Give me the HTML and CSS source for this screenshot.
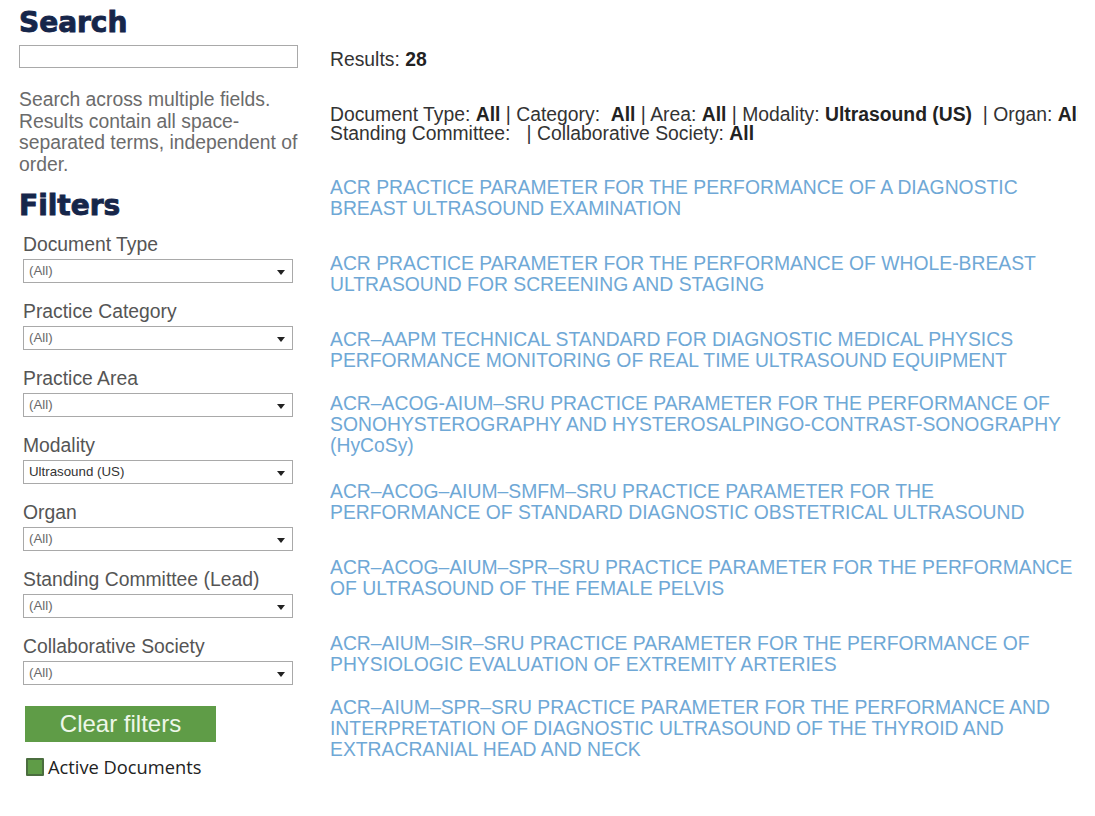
FILE: index.html
```html
<!DOCTYPE html>
<html lang="en">
<head>
<meta charset="utf-8">
<title>Search</title>
<link rel="stylesheet" href="styles.css">
</head>
<body>
<div class="page">
  <aside class="sidebar">
    <h2 class="heading heading--search">Search</h2>
    <input class="search-input" type="text" aria-label="Search">
    <p class="help">Search across multiple fields. Results contain all space-separated terms, independent of order.</p>
    <h2 class="heading heading--filters">Filters</h2>
    <div class="filter">
      <label class="filter-label">Document Type</label>
      <div class="select"><span class="select-value">(All)</span></div>
    </div>
    <div class="filter">
      <label class="filter-label">Practice Category</label>
      <div class="select"><span class="select-value">(All)</span></div>
    </div>
    <div class="filter">
      <label class="filter-label">Practice Area</label>
      <div class="select"><span class="select-value">(All)</span></div>
    </div>
    <div class="filter">
      <label class="filter-label">Modality</label>
      <div class="select"><span class="select-value select-value--set">Ultrasound (US)</span></div>
    </div>
    <div class="filter">
      <label class="filter-label">Organ</label>
      <div class="select"><span class="select-value">(All)</span></div>
    </div>
    <div class="filter">
      <label class="filter-label">Standing Committee (Lead)</label>
      <div class="select"><span class="select-value">(All)</span></div>
    </div>
    <div class="filter">
      <label class="filter-label">Collaborative Society</label>
      <div class="select"><span class="select-value">(All)</span></div>
    </div>
    <button class="clear-btn" type="button">Clear filters</button>
    <div class="legend"><span class="legend-box"></span><span class="legend-text">Active Documents</span></div>
  </aside>
  <main class="results">
    <div class="count">Results: <b>28</b></div>
    <div class="summary">
      <div class="summary-line">Document Type: <b>All</b> | Category:&nbsp; <b>All</b> | Area: <b>All</b> | Modality: <b>Ultrasound (US)</b>&nbsp; | Organ: <b>All</b></div>
      <div class="summary-line">Standing Committee: &nbsp; | Collaborative Society: <b>All</b></div>
    </div>
    <ul class="result-list">
      <li class="result"><a href="#">ACR PRACTICE PARAMETER FOR THE PERFORMANCE OF A DIAGNOSTIC BREAST ULTRASOUND EXAMINATION</a></li>
      <li class="result"><a href="#">ACR PRACTICE PARAMETER FOR THE PERFORMANCE OF WHOLE-BREAST ULTRASOUND FOR SCREENING AND STAGING</a></li>
      <li class="result result--tight"><a href="#">ACR–AAPM TECHNICAL STANDARD FOR DIAGNOSTIC MEDICAL PHYSICS PERFORMANCE MONITORING OF REAL TIME ULTRASOUND EQUIPMENT</a></li>
      <li class="result result--mid"><a href="#">ACR–ACOG-AIUM–SRU PRACTICE PARAMETER FOR THE PERFORMANCE OF SONOHYSTEROGRAPHY AND HYSTEROSALPINGO-CONTRAST-SONOGRAPHY (HyCoSy)</a></li>
      <li class="result"><a href="#">ACR–ACOG–AIUM–SMFM–SRU PRACTICE PARAMETER FOR THE PERFORMANCE OF STANDARD DIAGNOSTIC OBSTETRICAL ULTRASOUND</a></li>
      <li class="result"><a href="#">ACR–ACOG–AIUM–SPR–SRU PRACTICE PARAMETER FOR THE PERFORMANCE OF ULTRASOUND OF THE FEMALE PELVIS</a></li>
      <li class="result result--tight"><a href="#">ACR–AIUM–SIR–SRU PRACTICE PARAMETER FOR THE PERFORMANCE OF PHYSIOLOGIC EVALUATION OF EXTREMITY ARTERIES</a></li>
      <li class="result"><a href="#">ACR–AIUM–SPR–SRU PRACTICE PARAMETER FOR THE PERFORMANCE AND INTERPRETATION OF DIAGNOSTIC ULTRASOUND OF THE THYROID AND EXTRACRANIAL HEAD AND NECK</a></li>
    </ul>
  </main>
</div>
</body>
</html>
```
FILE: styles.css
```css
html, body {
  margin: 0;
  padding: 0;
  background: #ffffff;
}

body {
  font-family: "Liberation Sans", Arial, sans-serif;
  font-size: 19.33px;
  color: #333333;
}

.page {
  display: flex;
  align-items: flex-start;
  padding: 0 17px 0 19px;
}

.sidebar {
  width: 279px;
  flex: none;
  display: flex;
  flex-direction: column;
  align-items: flex-start;
}

.heading {
  margin: 0;
  font-family: "DejaVu Sans", sans-serif;
  font-weight: bold;
  font-size: 28px;
  line-height: 32px;
  color: #16264a;
  -webkit-text-stroke: 0.9px #16264a;
}

.heading--search {
  margin-top: 7px;
}

.heading--filters {
  margin-top: 14px;
}

.search-input {
  box-sizing: border-box;
  width: 279px;
  height: 23px;
  margin: 6px 0 0;
  border: 1px solid #a9a9a9;
  padding: 0 4px;
  background: #fff;
  outline: none;
}

.help {
  margin: 21px 0 0;
  line-height: 21.7px;
  color: #6b6b6b;
}

.filter {
  display: flex;
  flex-direction: column;
  margin-left: 4px;
  margin-top: 18px;
}

.heading--filters + .filter {
  margin-top: 12px;
}

.filter-label {
  line-height: 22px;
  color: #555555;
}

.select {
  position: relative;
  box-sizing: border-box;
  width: 270px;
  height: 24px;
  margin-top: 3px;
  border: 1px solid #a9a9a9;
  background: #fff;
  display: flex;
  align-items: center;
  padding-left: 5px;
}

.select::after {
  content: "";
  position: absolute;
  right: 7px;
  top: 10px;
  border-left: 4px solid transparent;
  border-right: 4px solid transparent;
  border-top: 5px solid #222;
}

.select-value {
  font-size: 13.3px;
  color: #6a6a6a;
}

.select-value--set {
  color: #333333;
}

.clear-btn {
  margin: 21px 0 0 6px;
  width: 191px;
  height: 36px;
  border: none;
  padding: 0;
  background: #5f9c47;
  color: #eef7e9;
  font-family: "Liberation Sans", Arial, sans-serif;
  font-size: 24px;
  line-height: 36px;
  cursor: pointer;
}

.legend {
  display: flex;
  align-items: center;
  margin: 14px 0 0 7px;
}

.legend-box {
  box-sizing: border-box;
  width: 18px;
  height: 18px;
  background: #5f9c47;
  border: 2px solid #4b6e3f;
  border-radius: 1px;
}

.legend-text {
  margin-left: 4px;
  font-family: "Open Sans", "Noto Sans", sans-serif;
  font-size: 18.3px;
  line-height: 22px;
  color: #222222;
}

.results {
  flex: 1;
  min-width: 0;
  margin-left: 32px;
  padding-top: 49px;
  overflow: hidden;
}

.count {
  line-height: 22px;
}

.count b {
  color: #222;
}

.summary {
  margin-top: 34px;
}

.summary-line {
  white-space: nowrap;
  line-height: 19px;
}

.summary b {
  color: #222;
}

.result-list {
  list-style: none;
  margin: 34px 0 0;
  padding: 0;
}

.result {
  margin-bottom: 34px;
  line-height: 21px;
}

.result--tight {
  margin-bottom: 22px;
}

.result--mid {
  margin-bottom: 25px;
}

.result a {
  color: #6fa8d6;
  text-decoration: none;
}
```
